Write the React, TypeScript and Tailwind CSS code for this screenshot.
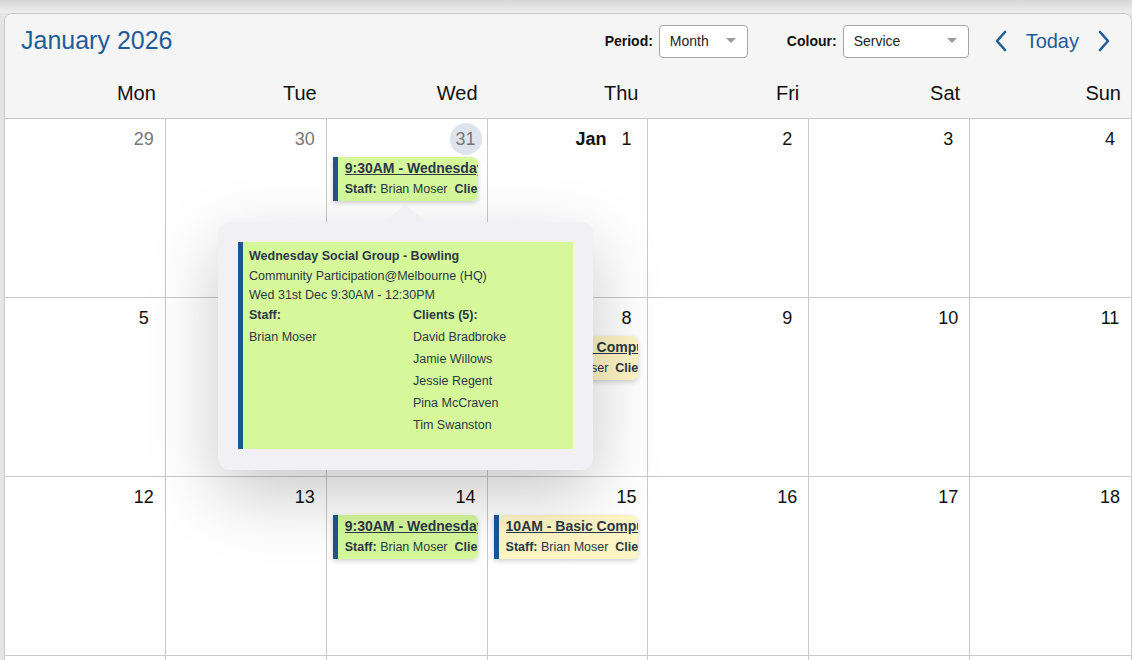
import React from "react";

const FONT = { fontFamily: '"Liberation Sans", Arial, Helvetica, sans-serif' };

type Ev = { kind: "green" | "yellow" };

function EventCard({ kind }: Ev) {
  const green = kind === "green";
  return (
    <div className="ml-[6px] mr-[9px] mt-[2px] flex h-[44px] overflow-hidden rounded-r-[6px] shadow-[0_2px_5px_rgba(0,0,0,0.18)]">
      <div className="w-[5px] shrink-0 bg-[#1d5591]" />
      <div
        className={
          "min-w-0 flex-1 pl-[7px] pt-[1px] text-[#2b3848] " +
          (green ? "bg-[#d6f89b]" : "bg-[#fdf5c4]")
        }
      >
        <div className="overflow-hidden whitespace-nowrap text-[14px] font-bold leading-[21px] underline">
          {green ? "9:30AM - Wednesday Social Group - Bowling" : "10AM - Basic Computer Skills"}
        </div>
        <div className="overflow-hidden whitespace-nowrap text-[12.5px] leading-[20px]">
          <span className="font-bold">Staff:</span> Brian Moser{"\u00a0\u00a0"}
          <span className="font-bold">Clients:</span> David Bradbroke
        </div>
      </div>
    </div>
  );
}

type Cell = { n: number; muted?: boolean; today?: boolean; jan?: boolean; ev?: "green" | "yellow" };

const weeks: Cell[][] = [
  [
    { n: 29, muted: true },
    { n: 30, muted: true },
    { n: 31, muted: true, today: true, ev: "green" },
    { n: 1, jan: true },
    { n: 2 },
    { n: 3 },
    { n: 4 },
  ],
  [
    { n: 5 },
    { n: 6 },
    { n: 7, ev: "green" },
    { n: 8, ev: "yellow" },
    { n: 9 },
    { n: 10 },
    { n: 11 },
  ],
  [
    { n: 12 },
    { n: 13 },
    { n: 14, ev: "green" },
    { n: 15, ev: "yellow" },
    { n: 16 },
    { n: 17 },
    { n: 18 },
  ],
  [
    { n: 19 },
    { n: 20 },
    { n: 21 },
    { n: 22 },
    { n: 23 },
    { n: 24 },
    { n: 25 },
  ],
];

const days = ["Mon", "Tue", "Wed", "Thu", "Fri", "Sat", "Sun"];

function Caret() {
  return (
    <svg width="10" height="6" viewBox="0 0 10 6">
      <path d="M0 0 L10 0 L5 5 Z" fill="#9a9a9a" />
    </svg>
  );
}

function Select({ label, value, width }: { label: string; value: string; width: string }) {
  return (
    <div className="flex items-center gap-[6px]">
      <span className="text-[14px] font-bold text-[#111]">{label}</span>
      <div
        className={
          "flex h-[33px] items-center justify-between rounded-[4px] border border-[#a5a5a5] bg-white pl-[10px] pr-[11px] text-[14px] text-[#222] " +
          width
        }
      >
        <span>{value}</span>
        <Caret />
      </div>
    </div>
  );
}

function Chevron({ dir }: { dir: "l" | "r" }) {
  return (
    <svg width="14" height="22" viewBox="0 0 14 22">
      <path
        d={dir === "l" ? "M11 2 L3 11 L11 20" : "M3 2 L11 11 L3 20"}
        fill="none"
        stroke="#1f5c9a"
        strokeWidth="2.6"
        strokeLinecap="round"
        strokeLinejoin="round"
      />
    </svg>
  );
}

export default function App() {
  return (
    <div className="relative flex h-[660px] w-[1132px] flex-col overflow-hidden bg-[#e4e4e4]" style={FONT}>
      <div className="h-[13px] shrink-0 bg-gradient-to-b from-[#d6d6d6] to-[#eeeeee]" />
      <div className="ml-[4px] w-[1128px] shrink-0 overflow-hidden rounded-t-[8px] border border-[#c9c9c9] bg-white">
        <div className="h-[105px] border-b border-[#c9c9c9] bg-[#f5f5f5]">
          <div className="flex h-[54px] items-center pl-[16px] pr-[20px]">
            <div className="text-[25px] text-[#1f5c9a]">January 2026</div>
            <div className="ml-auto flex items-center">
              <Select label="Period:" value="Month" width="w-[89px]" />
              <div className="w-[39px]" />
              <Select label="Colour:" value="Service" width="w-[126px]" />
              <div className="ml-[25px] flex items-center gap-[18px]">
                <Chevron dir="l" />
                <span className="text-[20px] text-[#1f5c9a]">Today</span>
                <Chevron dir="r" />
              </div>
            </div>
          </div>
          <div className="grid h-[51px] grid-cols-7 items-center">
            {days.map((d) => (
              <div key={d} className="pb-[1px] pr-[10px] text-right text-[20px] text-[#111]">
                {d}
              </div>
            ))}
          </div>
        </div>
        {weeks.map((w, wi) => (
          <div key={wi} className="grid h-[179px] grid-cols-7 border-b border-[#c9c9c9]">
            {w.map((c, ci) => (
              <div key={ci} className={"min-w-0 " + (ci < 6 ? "border-r border-[#c9c9c9]" : "")}>
                <div className="flex items-center justify-end gap-[4px] pr-[5px] pt-[4px]">
                  {c.jan && <span className="text-[18px] font-bold text-[#111]">Jan</span>}
                  <div
                    className={
                      "flex h-[32px] w-[32px] items-center justify-center rounded-full text-[18px] " +
                      (c.muted ? "text-[#777] " : "text-[#111] ") +
                      (c.today ? "bg-[#dde4ee]" : "")
                    }
                  >
                    {c.n}
                  </div>
                </div>
                {c.ev && <EventCard kind={c.ev} />}
              </div>
            ))}
          </div>
        ))}
      </div>

      {/* Popover */}
      <div className="absolute left-[218px] top-[222px] h-[248px] w-[375px] rounded-[12px] bg-[#f0f0f5] p-[20px] shadow-[0_24px_70px_rgba(0,0,0,0.22)]">
        <svg className="absolute left-[166px] top-[-18px]" width="42" height="19" viewBox="0 0 42 19">
          <path d="M0 19 L21 0 L42 19 Z" fill="#f0f0f5" />
        </svg>
        <div className="h-[207px] border-l-[5px] border-[#1d5591] bg-[#d6f89b] pl-[6px] pt-[5px] text-[12.5px] leading-[19.5px] text-[#2b3848]">
          <div className="font-bold">Wednesday Social Group - Bowling</div>
          <div>Community Participation@Melbourne (HQ)</div>
          <div>Wed 31st Dec 9:30AM - 12:30PM</div>
          <div className="grid grid-cols-[164px_1fr]">
            <div>
              <div className="font-bold">Staff:</div>
              <div className="leading-[22px] pt-[1px]">Brian Moser</div>
            </div>
            <div>
              <div className="font-bold">Clients (5):</div>
              <div className="leading-[22px] pt-[1px]">
                <div>David Bradbroke</div>
                <div>Jamie Willows</div>
                <div>Jessie Regent</div>
                <div>Pina McCraven</div>
                <div>Tim Swanston</div>
              </div>
            </div>
          </div>
        </div>
      </div>
    </div>
  );
}
